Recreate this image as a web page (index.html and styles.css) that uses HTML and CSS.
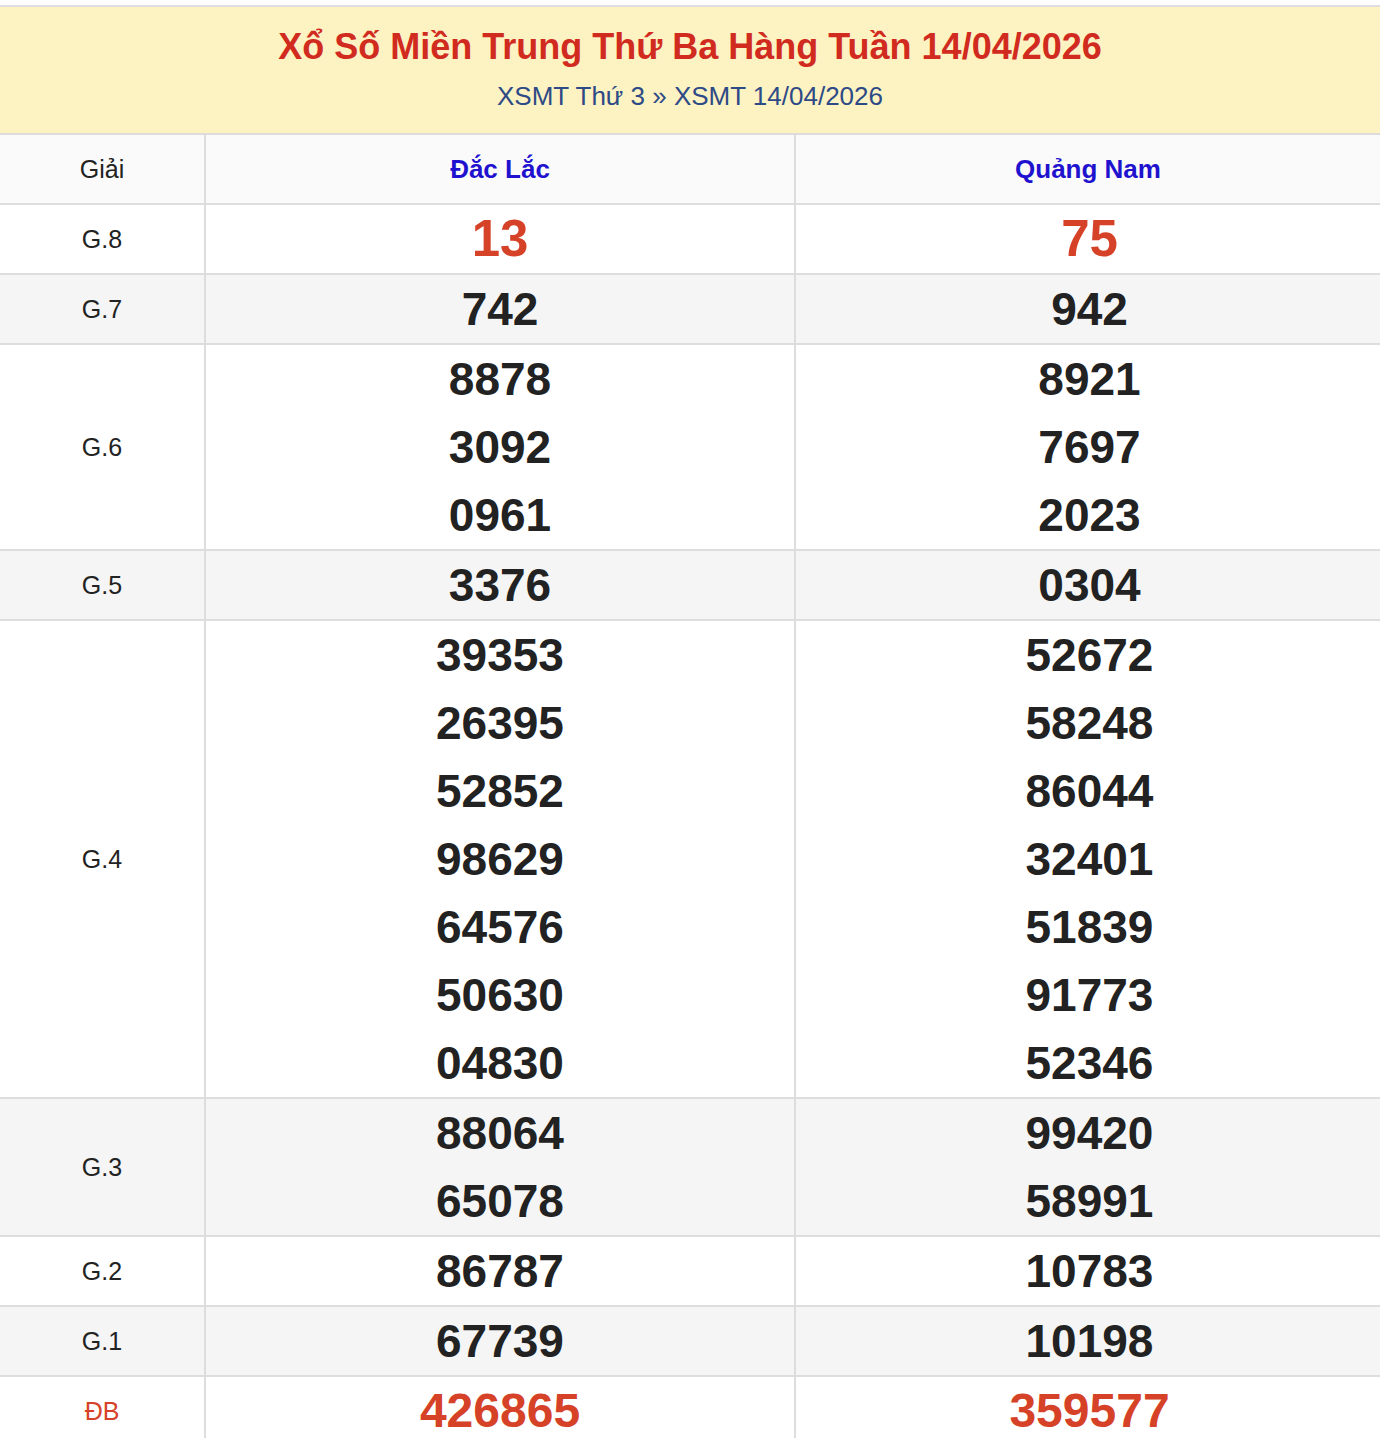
FILE: index.html
```html
<!DOCTYPE html>
<html lang="vi">
<head>
<meta charset="utf-8">
<title>Xổ Số Miền Trung Thứ Ba Hàng Tuần 14/04/2026</title>
<link rel="stylesheet" href="styles.css">
</head>
<body>
<div class="box">
  <div class="head">
    <h1 class="title">Xổ Số Miền Trung Thứ Ba Hàng Tuần 14/04/2026</h1>
    <div class="sub"><a href="#">XSMT Thứ 3</a> » <a href="#">XSMT 14/04/2026</a></div>
  </div>
  <div class="table">
    <div class="row thead">
      <div class="cell lbl">Giải</div>
      <div class="cell prov">Đắc Lắc</div>
      <div class="cell prov">Quảng Nam</div>
    </div>
    <div class="row">
      <div class="cell lbl">G.8</div>
      <div class="cell num g8">13</div>
      <div class="cell num g8">75</div>
    </div>
    <div class="row alt">
      <div class="cell lbl">G.7</div>
      <div class="cell num">742</div>
      <div class="cell num">942</div>
    </div>
    <div class="row">
      <div class="cell lbl">G.6</div>
      <div class="cell num">8878<br>3092<br>0961</div>
      <div class="cell num">8921<br>7697<br>2023</div>
    </div>
    <div class="row alt">
      <div class="cell lbl">G.5</div>
      <div class="cell num">3376</div>
      <div class="cell num">0304</div>
    </div>
    <div class="row">
      <div class="cell lbl">G.4</div>
      <div class="cell num">39353<br>26395<br>52852<br>98629<br>64576<br>50630<br>04830</div>
      <div class="cell num">52672<br>58248<br>86044<br>32401<br>51839<br>91773<br>52346</div>
    </div>
    <div class="row alt">
      <div class="cell lbl">G.3</div>
      <div class="cell num">88064<br>65078</div>
      <div class="cell num">99420<br>58991</div>
    </div>
    <div class="row">
      <div class="cell lbl">G.2</div>
      <div class="cell num">86787</div>
      <div class="cell num">10783</div>
    </div>
    <div class="row alt">
      <div class="cell lbl">G.1</div>
      <div class="cell num">67739</div>
      <div class="cell num">10198</div>
    </div>
    <div class="row db">
      <div class="cell lbl red">ĐB</div>
      <div class="cell num gdb">426865</div>
      <div class="cell num gdb">359577</div>
    </div>
  </div>
</div>
</body>
</html>
```

FILE: styles.css
```css
html, body {
  margin: 0;
  padding: 0;
  background: #fff;
}
body {
  font-family: "Liberation Sans", Arial, Helvetica, sans-serif;
  color: #222;
}
.box {
  margin-top: 5px;
  border-top: 2px solid #dedede;
}
.head {
  background: #fdf2c2;
  text-align: center;
  padding: 20px 0 22px;
  border-bottom: 2px solid #dcdcdc;
}
.title {
  margin: 0;
  font-size: 36px;
  line-height: 40px;
  font-weight: bold;
  color: #d12b1f;
}
.sub {
  margin-top: 14px;
  font-size: 26px;
  line-height: 30px;
  color: #2d4a86;
}
.sub a {
  color: #2d4a86;
  text-decoration: none;
}
.row {
  display: grid;
  grid-template-columns: 204px 590px 1fr;
  border-bottom: 2px solid #dddddd;
  background: #fff;
}
.row.alt {
  background: #f5f5f5;
}
.row.thead {
  background: #fafafa;
}
.cell {
  display: flex;
  align-items: center;
  justify-content: center;
  text-align: center;
}
.cell + .cell {
  border-left: 2px solid #dddddd;
}
.lbl {
  font-size: 25px;
  color: #222;
  min-height: 68px;
}
.lbl.red {
  color: #d64227;
}
.prov {
  font-size: 26px;
  font-weight: bold;
  color: #1f12cf;
  height: 68px;
}
.num {
  display: block;
  padding-left: 3px;
  font-size: 46px;
  line-height: 68px;
  font-weight: bold;
  color: #222;
}
.num.g8 {
  font-size: 51px;
  color: #d64227;
}
.num.gdb {
  font-size: 48px;
  color: #d64227;
}
.row .num:nth-child(2) {
  padding-left: 0;
}
```
